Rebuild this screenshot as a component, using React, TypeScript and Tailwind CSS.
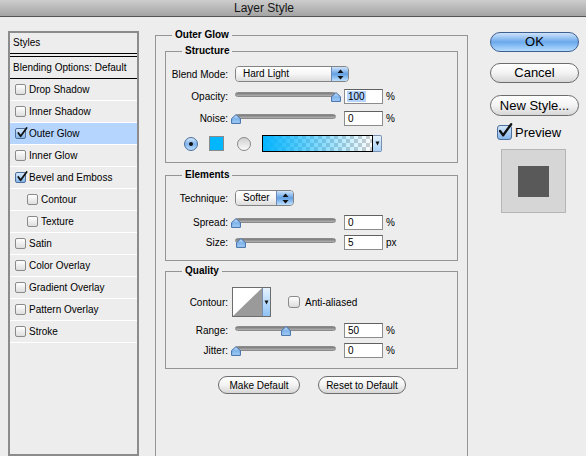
import React from 'react';

const font = "font-['Liberation_Sans',Arial,sans-serif]";

const styleItems = [
  { label: 'Drop Shadow' },
  { label: 'Inner Shadow' },
  { label: 'Outer Glow', checked: true, active: true },
  { label: 'Inner Glow' },
  { label: 'Bevel and Emboss', checked: true },
  { label: 'Contour', indent: true },
  { label: 'Texture', indent: true },
  { label: 'Satin' },
  { label: 'Color Overlay' },
  { label: 'Gradient Overlay' },
  { label: 'Pattern Overlay' },
  { label: 'Stroke' },
];

function CheckMark({ size }: { size: number }) {
  return (
    <svg width={size} height={size} viewBox="0 0 13 13" className="absolute left-[0px] top-[-2px]">
      <path d="M2.5 6.5 L5 10 L11.5 1" fill="none" stroke="#111" strokeWidth="1.9" strokeLinecap="round" strokeLinejoin="round" />
    </svg>
  );
}

function ListCheckbox({ checked }: { checked?: boolean }) {
  return (
    <div
      className={`relative w-[11px] h-[11px] rounded-[2px] border shrink-0 ${
        checked
          ? 'border-[#4f6f9c] bg-linear-to-b from-[#d6e8fb] to-[#84b6ea]'
          : 'border-[#8a8a8a] bg-linear-to-b from-white to-[#dedede]'
      }`}
    >
      {checked && <CheckMark size={12} />}
    </div>
  );
}

function Thumb({ value }: { value: number }) {
  return (
    <svg
      width="10"
      height="10"
      viewBox="0 0 10 10"
      className="absolute top-0"
      style={{ left: value - 4.5 }}
    >
      <defs>
        <linearGradient id="thumbGrad" x1="0" y1="0" x2="0" y2="1">
          <stop offset="0" stopColor="#d4e7fb" />
          <stop offset="0.5" stopColor="#7db2ea" />
          <stop offset="1" stopColor="#a9d2f8" />
        </linearGradient>
      </defs>
      <path d="M5 0.6 L9.4 4.6 V9.4 H0.6 V4.6 Z" fill="url(#thumbGrad)" stroke="#3f6ea8" strokeWidth="1" />
    </svg>
  );
}

function Slider({ value }: { value: number }) {
  return (
    <div className="relative w-[101px] h-[15px] shrink-0">
      <div className="mt-[5px] h-[5px] w-full rounded-full bg-linear-to-b from-[#7a7a7a] to-[#b3b3b3] border border-[#8b8b8b]" />
      <Thumb value={value} />
    </div>
  );
}

function Field({ value, selected }: { value: string; selected?: boolean }) {
  return (
    <div className="ml-[8px] w-[39px] h-[15px] shrink-0 bg-white border border-[#8c8c8c] border-t-[#606060] pl-[2px] text-[10px] leading-[13px]">
      {selected ? <span className="bg-[#b5d5ff] px-[1px]">{value}</span> : <span className="px-[1px]">{value}</span>}
    </div>
  );
}

function Label({ children }: { children: React.ReactNode }) {
  return <div className="w-[62px] shrink-0 text-right">{children}</div>;
}

function SliderRow({ label, value, field, unit, selected, className }: { label: string; value: number; field: string; unit: string; selected?: boolean; className: string }) {
  return (
    <div className={`flex items-center h-[15px] ${className}`}>
      <Label>{label}</Label>
      <div className="ml-[7px]">
        <Slider value={value} />
      </div>
      <Field value={field} selected={selected} />
      <span className="ml-[3px]">{unit}</span>
    </div>
  );
}

function Arrows() {
  return (
    <svg width="7" height="11" viewBox="0 0 7 11">
      <path d="M3.5 0.5 L6.5 4 H0.5 Z" fill="#111" />
      <path d="M0.5 7 H6.5 L3.5 10.5 Z" fill="#111" />
    </svg>
  );
}

function Select({ text, width }: { text: string; width: string }) {
  return (
    <div className={`ml-[7px] flex h-[16px] rounded-[4px] border border-[#838383] overflow-hidden shrink-0 ${width}`}>
      <div className="flex-1 bg-linear-to-b from-white via-[#f6f6f6] to-[#dcdcdc] pl-[7px] leading-[14px]">{text}</div>
      <div className="w-[17px] flex items-center justify-center border-l border-[#6a8bb6] bg-linear-to-b from-[#cfe4fa] via-[#62a0e4] to-[#bfe0fd]">
        <Arrows />
      </div>
    </div>
  );
}

function Radio({ on }: { on?: boolean }) {
  return on ? (
    <div className="w-[14px] h-[14px] rounded-full border border-[#4a6d9c] bg-linear-to-b from-[#d5e8fb] via-[#7fb4ec] to-[#b9dbfb] flex items-center justify-center shrink-0">
      <div className="w-[4px] h-[4px] rounded-full bg-[#111]" />
    </div>
  ) : (
    <div className="w-[14px] h-[14px] rounded-full border border-[#8a8a8a] bg-linear-to-b from-[#cfcfcf] to-[#fbfbfb] shrink-0" />
  );
}

function GradientSwatch() {
  return (
    <svg width="111" height="17" viewBox="0 0 111 17" className="block">
      <defs>
        <pattern id="checker" width="8" height="8" patternUnits="userSpaceOnUse">
          <rect width="8" height="8" fill="#ffffff" />
          <rect width="4" height="4" fill="#cdcdcd" />
          <rect x="4" y="4" width="4" height="4" fill="#cdcdcd" />
        </pattern>
        <linearGradient id="glow" x1="0" y1="0" x2="1" y2="0">
          <stop offset="0" stopColor="#00b4ff" stopOpacity="1" />
          <stop offset="1" stopColor="#00b4ff" stopOpacity="0" />
        </linearGradient>
      </defs>
      <rect x="0" y="0" width="111" height="17" fill="url(#checker)" />
      <rect x="0" y="0" width="111" height="17" fill="url(#glow)" />
      <rect x="0.5" y="0.5" width="110" height="16" fill="none" stroke="#000" />
    </svg>
  );
}

function DownArrow() {
  return (
    <svg width="5" height="5" viewBox="0 0 5 5">
      <path d="M0.5 0.5 H4.5 L2.5 4.5 Z" fill="#111" />
    </svg>
  );
}

function Group({ title, className, children }: { title: string; className?: string; children: React.ReactNode }) {
  return (
    <fieldset className={`border border-[#959595] ${className ?? ''}`}>
      <legend className="ml-[16px] px-[3px] font-bold leading-[12px]">{title}</legend>
      {children}
    </fieldset>
  );
}

function PillButton({ children, primary, className }: { children: React.ReactNode; primary?: boolean; className: string }) {
  return (
    <div
      className={`flex items-center justify-center rounded-full border ${
        primary
          ? 'border-[#3d5f92] bg-linear-to-b from-[#cfe3f9] via-[#6aa8ec] to-[#b4dcfd]'
          : 'border-[#6c6c6c] bg-linear-to-b from-white via-[#f3f3f3] to-[#d6d6d6]'
      } ${className}`}
    >
      {children}
    </div>
  );
}

export default function App() {
  return (
    <div className={`w-[586px] h-[456px] overflow-hidden bg-[#ededed] text-black text-[10px] ${font}`}>
      <div className="h-[17px] border-b border-[#555] bg-linear-to-b from-[#cdcdcd] to-[#a4a4a4] pl-[234px] text-[12px] leading-[16px] text-[#161616]">
        Layer Style
      </div>

      <div className="flex items-start">
        {/* styles list */}
        <div className="ml-[8px] mt-[14px] w-[131px] h-[425px] border-2 border-[#8c8c8c] shrink-0">
          <div className="h-[20px] pl-[3px] leading-[20px]">Styles</div>
          <div className="h-[4px] border-y border-black" />
          <div className="h-[22px] border-b border-black pl-[3px] leading-[21px]">Blending Options: Default</div>
          {styleItems.map((item) => (
            <div
              key={item.label}
              className={`h-[22px] border-b border-white flex items-center ${item.indent ? 'pl-[17px]' : 'pl-[5px]'} ${
                item.active ? 'bg-[#b5d5ff]' : ''
              }`}
            >
              <ListCheckbox checked={item.checked} />
              <span className="ml-[3px]">{item.label}</span>
            </div>
          ))}
        </div>

        {/* settings */}
        <fieldset className="ml-[16px] mt-[12px] w-[313px] h-[460px] border border-[#959595] px-[9px] pt-[4px] shrink-0">
          <legend className="ml-[7px] px-[3px] font-bold leading-[12px]">Outer Glow</legend>

          <Group title="Structure" className="pb-[10px]">
            <div className="mt-[9px] flex items-center h-[16px]">
              <Label>Blend Mode:</Label>
              <Select text="Hard Light" width="w-[114px]" />
            </div>
            <SliderRow label="Opacity:" value={100} field="100" unit="%" selected className="mt-[7px]" />
            <SliderRow label="Noise:" value={0} field="0" unit="%" className="mt-[7px]" />
            <div className="mt-[9px] flex items-center h-[17px]">
              <div className="ml-[18px]">
                <Radio on />
              </div>
              <div className="ml-[11px] w-[15px] h-[15px] bg-[#00b6ff] border border-[#8a8a8a]" />
              <div className="ml-[13px]">
                <Radio />
              </div>
              <div className="ml-[11px] flex h-[17px]">
                <GradientSwatch />
                <div className="w-[9px] h-[17px] flex items-center justify-center border border-l-0 border-[#7a8fb0] rounded-r-[2px] bg-linear-to-b from-[#e4f1fd] to-[#a9d1f7]">
                  <DownArrow />
                </div>
              </div>
            </div>
          </Group>

          <Group title="Elements" className="mt-[6px] pb-[10px]">
            <div className="mt-[9px] flex items-center h-[16px]">
              <Label>Technique:</Label>
              <Select text="Softer" width="w-[59px]" />
            </div>
            <SliderRow label="Spread:" value={0} field="0" unit="%" className="mt-[9px]" />
            <SliderRow label="Size:" value={5} field="5" unit="px" className="mt-[5px]" />
          </Group>

          <Group title="Quality" className="mt-[4px] pb-[10px]">
            <div className="mt-[10px] flex items-center h-[30px]">
              <Label>Contour:</Label>
              <div className="ml-[4px] flex h-[30px] border border-[#6d6d6d]">
                <svg width="29" height="28" viewBox="0 0 29 28" className="block">
                  <rect width="29" height="28" fill="#ffffff" />
                  <polygon points="0,28 29,0 29,28" fill="#9a9a9a" />
                </svg>
                <div className="w-[8px] flex items-center justify-center border-l border-[#7a8fb0] bg-linear-to-b from-[#e6f2fd] via-[#b9dbfb] to-[#8ec3f4]">
                  <DownArrow />
                </div>
              </div>
              <div className="ml-[17px] w-[12px] h-[12px] rounded-[3px] border border-[#8a8a8a] bg-linear-to-b from-white to-[#dcdcdc]" />
              <span className="ml-[5px]">Anti-aliased</span>
            </div>
            <SliderRow label="Range:" value={50} field="50" unit="%" className="mt-[6px]" />
            <SliderRow label="Jitter:" value={0} field="0" unit="%" className="mt-[5px]" />
          </Group>

          <div className="mt-[7px] flex">
            <PillButton className="ml-[53px] w-[82px] h-[18px]">Make Default</PillButton>
            <PillButton className="ml-[18px] w-[88px] h-[18px]">Reset to Default</PillButton>
          </div>
        </fieldset>

        {/* actions */}
        <div className="ml-[22px] mt-[15px] w-[89px] shrink-0 text-[13px]">
          <PillButton primary className="h-[20px]">OK</PillButton>
          <PillButton className="mt-[11px] h-[20px]">Cancel</PillButton>
          <PillButton className="mt-[12px] h-[21px]">New Style...</PillButton>
          <div className="mt-[9px] ml-[7px] flex items-center h-[15px]">
            <div className="relative w-[15px] h-[15px] rounded-[3px] border border-[#4f6f9c] bg-linear-to-b from-[#d6e8fb] to-[#84b6ea]">
              <svg width="16" height="16" viewBox="0 0 13 13" className="absolute left-[-1px] top-[-3px]">
                <path d="M2.5 6.5 L5 10 L11.5 1" fill="none" stroke="#111" strokeWidth="1.9" strokeLinecap="round" strokeLinejoin="round" />
              </svg>
            </div>
            <span className="ml-[3px]">Preview</span>
          </div>
          <div className="mt-[9px] ml-[11px] w-[65px] h-[64px] border border-[#b5b5b5] bg-[#d6d6d6] flex items-center justify-center">
            <div className="w-[31px] h-[31px] bg-[#595959]" />
          </div>
        </div>
      </div>
    </div>
  );
}
